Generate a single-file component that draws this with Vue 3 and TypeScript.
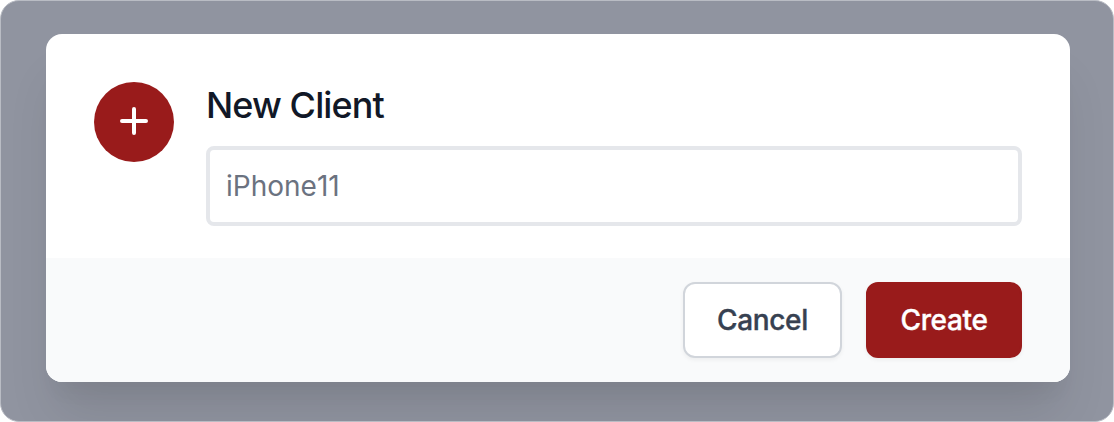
<script setup lang="ts">
import { ref } from 'vue'

const clientName = ref('')
</script>

<template>
  <div class="overlay">
    <section class="dialog" role="dialog" aria-labelledby="dialog-title">
      <div class="body">
        <div class="badge">
          <svg viewBox="0 0 48 48" fill="none" stroke="currentColor" stroke-width="4" stroke-linecap="round">
            <path d="M24 12V36M12 24H36" />
          </svg>
        </div>
        <div class="content">
          <h3 id="dialog-title">New Client</h3>
          <input v-model="clientName" type="text" placeholder="iPhone11" />
        </div>
      </div>
      <footer class="actions">
        <button type="button" class="cancel"><span>Cancel</span></button>
        <button type="button" class="create"><span>Create</span></button>
      </footer>
    </section>
  </div>
</template>

<style>
body {
  background: #fff;
}
</style>

<style scoped>
* {
  box-sizing: border-box;
}
.overlay {
  height: 422px;
  padding: 33px 43px 39px 45px;
  overflow: hidden;
  border: 1px solid #b9bcc4;
  border-radius: 19px;
  background: #9094a0;
  font-family: Inter, "Liberation Sans", sans-serif;
}
.dialog {
  height: 348px;
  overflow: hidden;
  border-radius: 16px;
  background: #fff;
  box-shadow: 0 40px 50px -10px rgba(0, 0, 0, 0.1), 0 20px 20px -10px rgba(0, 0, 0, 0.04);
}
.body {
  display: flex;
  gap: 32px;
  height: 224px;
  padding: 48px 48px 32px;
}
.badge {
  flex: none;
  width: 80px;
  height: 80px;
  padding: 15px 16px 17px;
  border-radius: 50%;
  background: #991b1b;
  color: #fff;
}
.badge svg {
  display: block;
  width: 48px;
  height: 48px;
}
.content {
  flex: 1;
}
h3 {
  margin: 0 0 18px;
  color: #111827;
  font-size: 36px;
  font-weight: 500;
  line-height: 46px;
  letter-spacing: -0.9px;
}
input {
  display: block;
  width: 100%;
  height: 80px;
  padding: 0 16px;
  border: 4px solid #e5e7eb;
  border-radius: 8px;
  outline: none;
  background: #fff;
  font: 400 28px/40px Inter, "Liberation Sans", sans-serif;
  font-kerning: none;
  letter-spacing: 0;
}
input::placeholder {
  color: #6b7280;
  opacity: 1;
}
.actions {
  display: flex;
  justify-content: flex-end;
  gap: 24px;
  height: 124px;
  padding: 24px 48px;
  background: #f9fafb;
}
button {
  height: 76px;
  padding: 0;
  border: 2px solid transparent;
  border-radius: 12px;
  font: 500 28px/40px Inter, "Liberation Sans", sans-serif;
  letter-spacing: -0.35px;
  -webkit-text-stroke: 0.35px currentColor;
  box-shadow: 0 2px 4px rgba(0, 0, 0, 0.05);
}
.cancel {
  width: 159px;
  border-color: #d1d5db;
  background: #fff;
  color: #374151;
}
.create {
  width: 156px;
  border-color: #991b1b;
  background: #991b1b;
  color: #fff;
}
</style>
